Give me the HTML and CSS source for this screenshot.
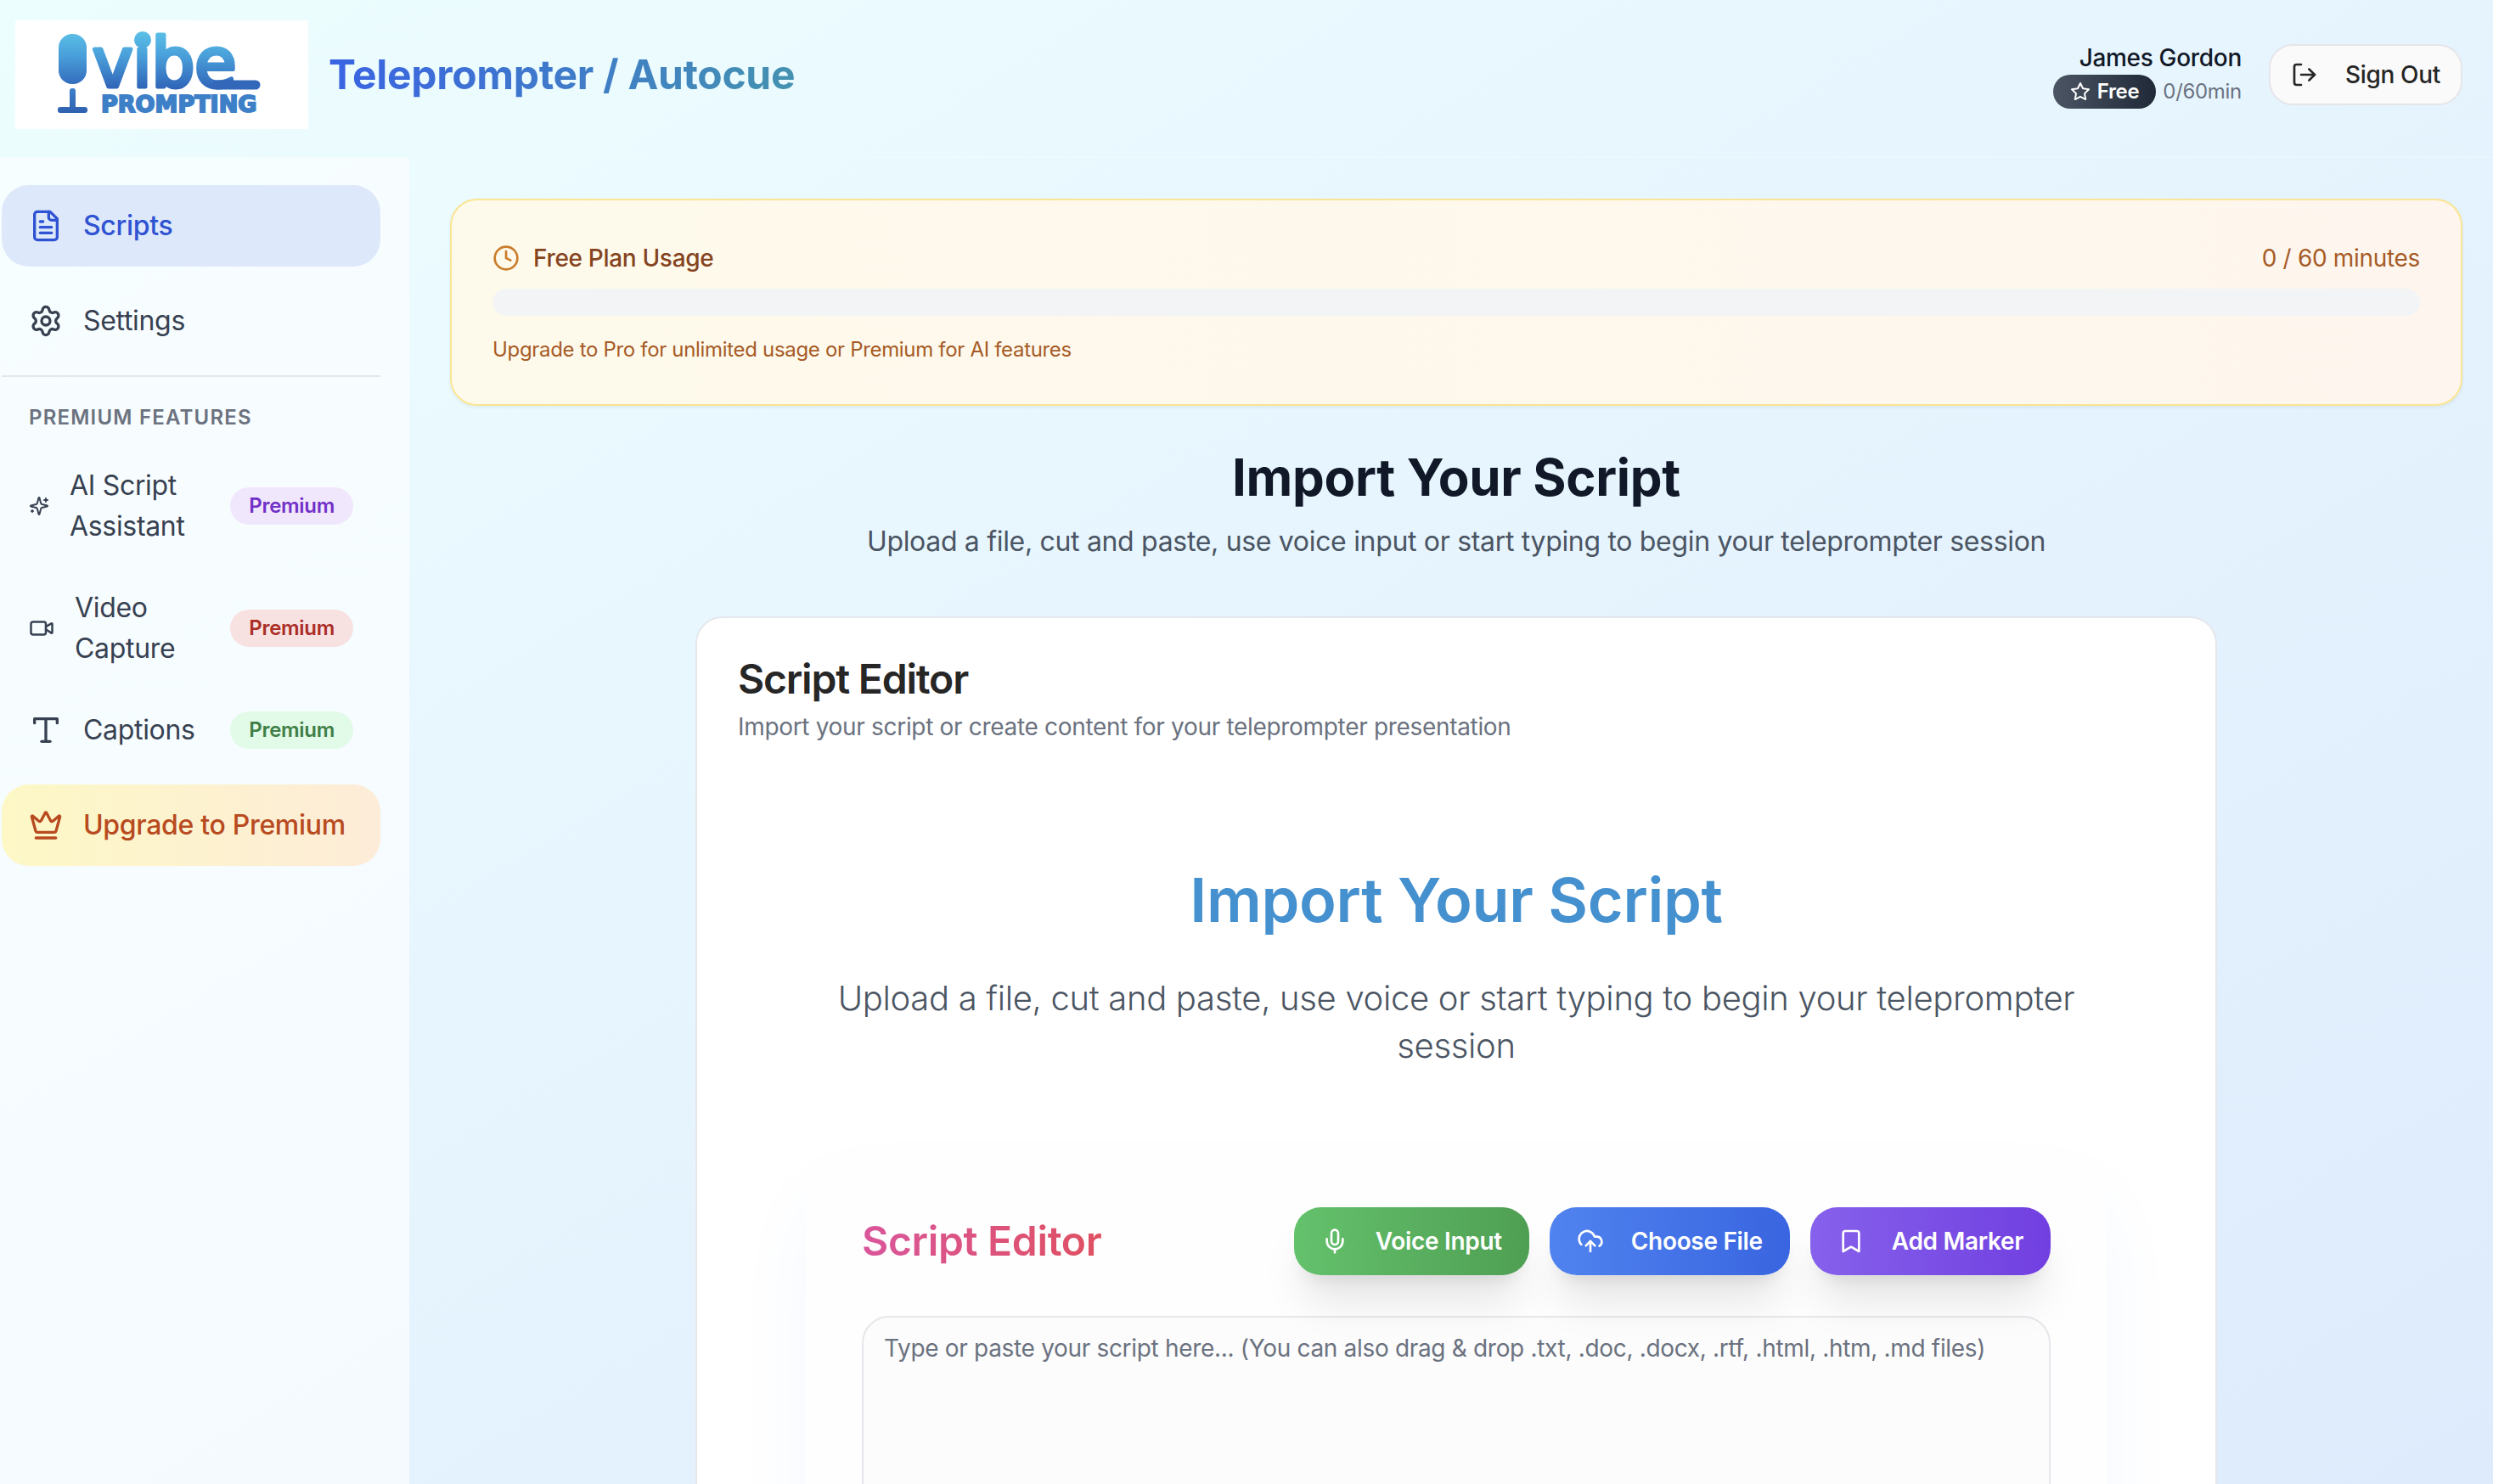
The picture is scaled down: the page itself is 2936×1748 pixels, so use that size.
FILE: index.html
```html
<!DOCTYPE html>
<html lang="en">
<head>
<meta charset="utf-8">
<meta name="viewport" content="width=device-width, initial-scale=1">
<title>Teleprompter / Autocue</title>
<link rel="stylesheet" href="styles.css">
</head>
<body>
<div class="app">
  <header class="header">
    <a class="logo" href="#" aria-label="Vibe Prompting">
      <svg class="logo-art" viewBox="0 0 345 128">
        <defs>
          <linearGradient id="mark" gradientUnits="userSpaceOnUse" x1="0" y1="14" x2="0" y2="82">
            <stop offset="0" stop-color="#5abfe6"/>
            <stop offset="0.4" stop-color="#4aa0da"/>
            <stop offset="1" stop-color="#2f62b7"/>
          </linearGradient>
          <linearGradient id="stand" gradientUnits="userSpaceOnUse" x1="0" y1="78" x2="0" y2="110">
            <stop offset="0" stop-color="#3f83cb"/>
            <stop offset="1" stop-color="#2d5fae"/>
          </linearGradient>
        </defs>
        <rect x="51" y="16" width="33" height="59" rx="16" fill="url(#mark)"/>
        <rect x="64" y="80" width="7" height="26" rx="3" fill="url(#stand)"/>
        <rect x="50" y="102" width="35" height="7" rx="3" fill="url(#stand)"/>
        <text class="logo-word" x="91" y="78">vibe</text>
        <circle cx="150" cy="23" r="10" fill="url(#mark)"/>
        <path d="M238 76H283" fill="none" stroke="#3267ba" stroke-width="11" stroke-linecap="round"/>
        <text class="logo-sub" x="101" y="108">PROMPTING</text>
      </svg>
    </a>
    <h1 class="brand-title">Teleprompter / Autocue</h1>
    <div class="account">
      <div class="user">
        <span class="user-name">James Gordon</span>
        <span class="user-plan">
          <span class="plan-badge">
            <svg class="icon icon-xs" viewBox="0 0 24 24"><polygon points="12 2 15.09 8.26 22 9.27 17 14.14 18.18 21.02 12 17.77 5.82 21.02 7 14.14 2 9.27 8.91 8.26 12 2"/></svg>
            Free
          </span>
          <span class="plan-minutes">0/60min</span>
        </span>
      </div>
      <button class="sign-out" type="button">
        <svg class="icon icon-sm" viewBox="0 0 24 24"><path d="M9 21H5a2 2 0 0 1-2-2V5a2 2 0 0 1 2-2h4"/><path d="M16 17l5-5-5-5"/><path d="M21 12H9"/></svg>
        Sign Out
      </button>
    </div>
  </header>

  <div class="body">
    <aside class="sidebar">
      <nav class="nav">
        <button class="nav-item nav-item-active" type="button">
          <svg class="icon icon-md" viewBox="0 0 24 24"><path d="M15 2H6a2 2 0 0 0-2 2v16a2 2 0 0 0 2 2h12a2 2 0 0 0 2-2V7Z"/><path d="M14 2v4a2 2 0 0 0 2 2h4"/><path d="M10 9H8"/><path d="M16 13H8"/><path d="M16 17H8"/></svg>
          Scripts
        </button>
        <button class="nav-item" type="button">
          <svg class="icon icon-md" viewBox="0 0 24 24"><path d="M9.671 4.136a2.34 2.34 0 0 1 4.659 0 2.34 2.34 0 0 0 3.319 1.915 2.34 2.34 0 0 1 2.33 4.033 2.34 2.34 0 0 0 0 3.831 2.34 2.34 0 0 1-2.33 4.033 2.34 2.34 0 0 0-3.319 1.915 2.34 2.34 0 0 1-4.659 0 2.34 2.34 0 0 0-3.32-1.915 2.34 2.34 0 0 1-2.33-4.033 2.34 2.34 0 0 0 0-3.831A2.34 2.34 0 0 1 6.35 6.051a2.34 2.34 0 0 0 3.319-1.915"/><circle cx="12" cy="12" r="3"/></svg>
          Settings
        </button>
        <section class="premium">
          <h2 class="premium-title">Premium Features</h2>
          <button class="nav-item" type="button">
            <svg class="icon icon-sparkles" viewBox="0 0 24 24"><path d="M9.937 15.5A2 2 0 0 0 8.5 14.063l-6.135-1.582a.5.5 0 0 1 0-.962L8.5 9.936A2 2 0 0 0 9.937 8.5l1.582-6.135a.5.5 0 0 1 .963 0L14.063 8.5A2 2 0 0 0 15.5 9.937l6.135 1.581a.5.5 0 0 1 0 .964L15.5 14.063a2 2 0 0 0-1.437 1.437l-1.582 6.135a.5.5 0 0 1-.963 0z"/><path d="M20 3v4"/><path d="M22 5h-4"/><path d="M4 17v2"/><path d="M5 18H3"/></svg>
            <span class="nav-label">AI Script Assistant</span>
            <span class="badge badge-purple">Premium</span>
          </button>
          <button class="nav-item" type="button">
            <svg class="icon icon-video" viewBox="0 0 24 24"><path d="m16 13 5.223 3.482a.5.5 0 0 0 .777-.416V7.87a.5.5 0 0 0-.752-.432L16 10.5"/><rect x="2" y="6" width="14" height="12" rx="2"/></svg>
            <span class="nav-label">Video Capture</span>
            <span class="badge badge-red">Premium</span>
          </button>
          <button class="nav-item" type="button">
            <svg class="icon icon-md" viewBox="0 0 24 24"><path d="M4 7V4h16v3"/><path d="M9 20h6"/><path d="M12 4v16"/></svg>
            <span class="nav-label">Captions</span>
            <span class="badge badge-green">Premium</span>
          </button>
        </section>
        <button class="nav-item nav-item-upgrade" type="button">
          <svg class="icon icon-md" viewBox="0 0 24 24"><path d="M11.562 3.266a.5.5 0 0 1 .876 0L15.39 8.87a1 1 0 0 0 1.516.294L21.183 5.5a.5.5 0 0 1 .798.519l-2.834 10.246a1 1 0 0 1-.956.734H5.81a1 1 0 0 1-.957-.734L2.02 6.02a.5.5 0 0 1 .798-.519l4.276 3.664a1 1 0 0 0 1.516-.294z"/><path d="M5 21h14"/></svg>
          Upgrade to Premium
        </button>
      </nav>
    </aside>

    <main class="main">
      <section class="usage">
        <div class="usage-head">
          <svg class="icon icon-sm usage-icon" viewBox="0 0 24 24"><circle cx="12" cy="12" r="10"/><path d="M12 6v6l4 2"/></svg>
          <span class="usage-title">Free Plan Usage</span>
          <span class="usage-count">0 / 60 minutes</span>
        </div>
        <div class="usage-bar" role="progressbar" aria-label="Free plan usage" aria-valuemin="0" aria-valuemax="60" aria-valuenow="0"></div>
        <p class="usage-hint">Upgrade to Pro for unlimited usage or Premium for AI features</p>
      </section>

      <section class="intro">
        <h2 class="intro-title">Import Your Script</h2>
        <p class="intro-text">Upload a file, cut and paste, use voice input or start typing to begin your teleprompter session</p>
      </section>

      <section class="card">
        <h3 class="card-title">Script Editor</h3>
        <p class="card-text">Import your script or create content for your teleprompter presentation</p>
        <div class="import">
          <h2 class="import-title">Import Your Script</h2>
          <p class="import-text">Upload a file, cut and paste, use voice or start typing to begin your teleprompter session</p>
          <div class="editor">
            <div class="editor-head">
              <h3 class="editor-title">Script Editor</h3>
              <div class="actions">
                <button class="action action-green" type="button">
                  <svg class="icon icon-sm" viewBox="0 0 24 24"><path d="M12 2a3 3 0 0 0-3 3v7a3 3 0 0 0 6 0V5a3 3 0 0 0-3-3Z"/><path d="M19 10v2a7 7 0 0 1-14 0v-2"/><path d="M12 19v3"/></svg>
                  Voice Input
                </button>
                <button class="action action-blue" type="button">
                  <svg class="icon icon-sm" viewBox="0 0 24 24"><path d="M4 14.899A7 7 0 1 1 15.71 8h1.79a4.5 4.5 0 0 1 2.5 8.242"/><path d="M12 12v9"/><path d="m16 16-4-4-4 4"/></svg>
                  Choose File
                </button>
                <button class="action action-purple" type="button">
                  <svg class="icon icon-sm" viewBox="0 0 24 24"><path d="m19 21-7-4-7 4V5a2 2 0 0 1 2-2h10a2 2 0 0 1 2 2v16z"/></svg>
                  Add Marker
                </button>
              </div>
            </div>
            <textarea class="editor-input" aria-label="Script" placeholder="Type or paste your script here... (You can also drag &amp; drop .txt, .doc, .docx, .rtf, .html, .htm, .md files)"></textarea>
          </div>
        </div>
      </section>
    </main>
  </div>
</div>
</body>
</html>
```
FILE: styles.css
```css
* {
  box-sizing: border-box;
  margin: 0;
}

body {
  font-family: Inter, "Liberation Sans", sans-serif;
  font-size: 32px;
  line-height: 48px;
  letter-spacing: -0.01em;
  color: #262626;
}

button,
textarea {
  font: inherit;
  letter-spacing: inherit;
  color: inherit;
}

button {
  border: 0;
  background: none;
  cursor: pointer;
}

.app {
  display: flex;
  flex-direction: column;
  height: 100vh;
  overflow: hidden;
  background: linear-gradient(to bottom right, #edfefe, #e6f4fe 50%, #deebfc);
}

/* Icons */

.icon {
  flex: none;
  fill: none;
  stroke: currentColor;
  stroke-width: 2;
  stroke-linecap: round;
  stroke-linejoin: round;
}

.icon-xs { width: 24px; height: 24px; }
.icon-sm { width: 32px; height: 32px; }
.icon-md { width: 40px; height: 40px; }
.icon-sparkles { width: 24px; height: 40px; }
.icon-video { width: 30px; height: 40px; }

/* Header */

.header {
  flex: none;
  display: flex;
  align-items: center;
  gap: 24px;
  padding: 24px 36px 32px 18px;
  border-bottom: 2px solid rgba(255, 255, 255, 0.2);
}

.logo {
  display: block;
  width: 345px;
  height: 128px;
  background: #fff;
}

.logo-art {
  display: block;
  width: 100%;
  height: 100%;
}

.logo-word,
.logo-sub {
  font-family: "DejaVu Sans", sans-serif;
  letter-spacing: normal;
}

.logo-word {
  font-size: 80px;
  fill: url(#mark);
  stroke: url(#mark);
  stroke-width: 5px;
  stroke-linejoin: round;
}

.logo-sub {
  font-size: 27px;
  font-weight: 700;
  fill: #3e80c8;
  stroke: #3e80c8;
  stroke-width: 2px;
}

.brand-title {
  font-size: 48px;
  line-height: 64px;
  font-weight: 700;
  color: transparent;
  background: linear-gradient(to right, #3a63e3, #4492b0);
  background-clip: text;
  -webkit-background-clip: text;
}

.account {
  display: flex;
  align-items: center;
  gap: 32px;
  margin-left: auto;
}

.user {
  display: flex;
  flex-direction: column;
  align-items: flex-end;
  font-size: 24px;
  line-height: 32px;
}

.user-name {
  font-size: 28px;
  line-height: 40px;
  font-weight: 500;
  color: #111827;
}

.user-plan {
  display: flex;
  align-items: center;
  gap: 8px;
  color: #6b7280;
}

.plan-badge {
  display: flex;
  align-items: center;
  gap: 8px;
  padding: 4px 20px;
  border-radius: 20px;
  font-weight: 600;
  color: #fff;
  background: linear-gradient(to right, #4b5563, #1f2937);
}

.sign-out {
  display: flex;
  align-items: center;
  gap: 32px;
  height: 72px;
  padding: 0 24px;
  border: 2px solid #e5e5ea;
  border-radius: 28px;
  font-size: 28px;
  line-height: 40px;
  font-weight: 500;
  background: #fafafa;
}

/* Sidebar */

.body {
  flex: 1;
  display: flex;
  min-height: 0;
}

.sidebar {
  flex: none;
  width: 482px;
  padding: 32px 34px 32px 2px;
  background: rgba(255, 255, 255, 0.6);
}

.nav {
  display: flex;
  flex-direction: column;
  gap: 16px;
}

.nav-item {
  display: flex;
  align-items: center;
  gap: 24px;
  width: 100%;
  padding: 24px 32px;
  border-radius: 32px;
  text-align: left;
  color: #374151;
}

.nav-item-active {
  font-weight: 500;
  color: #2f53d2;
  background: #dde8fb;
}

.nav-item-upgrade {
  font-weight: 500;
  color: #b84a20;
  background: linear-gradient(to right, #fdf8c6, #fdecd8);
}

.nav-label {
  flex: 1;
}

.premium {
  padding-top: 32px;
  border-top: 2px solid #e5e7eb;
}

.premium-title {
  margin-bottom: 16px;
  padding: 0 32px;
  font-size: 24px;
  line-height: 32px;
  font-weight: 600;
  letter-spacing: 0.05em;
  text-transform: uppercase;
  color: #6b7280;
}

.badge {
  flex: none;
  padding: 6px 22px;
  border-radius: 22px;
  font-size: 24px;
  line-height: 32px;
  font-weight: 600;
}

.badge-purple { color: #7230c8; background: #f1e7fc; }
.badge-red { color: #ab2e27; background: #f8e2e1; }
.badge-green { color: #3f7f45; background: #e2fae8; }

/* Main column */

.main {
  flex: 1;
  min-width: 0;
  padding: 48px 36px 48px 48px;
}

.usage {
  padding: 48px;
  border: 2px solid #fae592;
  border-radius: 32px;
  background: linear-gradient(to right, #fefaeb, #fef6ee);
  box-shadow: 0 2px 4px rgba(0, 0, 0, 0.06);
}

.usage-head {
  display: flex;
  align-items: center;
  gap: 16px;
  font-size: 28px;
  line-height: 40px;
}

.usage-icon {
  color: #ca7d2b;
}

.usage-title {
  font-weight: 500;
  color: #854420;
}

.usage-count {
  margin-left: auto;
  color: #a65b26;
}

.usage-bar {
  height: 32px;
  margin: 16px 0 24px;
  border-radius: 16px;
  background: #f3f4f6;
}

.usage-hint {
  font-size: 24px;
  line-height: 32px;
  color: #a65b26;
}

.intro {
  padding: 48px 0 64px;
  text-align: center;
}

.intro-title {
  margin-bottom: 16px;
  font-size: 60px;
  line-height: 72px;
  font-weight: 700;
  color: #111827;
}

.intro-text {
  color: #4b5563;
}

.card {
  max-width: 1792px;
  margin: 0 auto;
  padding: 48px;
  border: 2px solid #e5e7eb;
  border-radius: 32px;
  background: #fff;
}

.card-title {
  margin-bottom: 12px;
  font-size: 48px;
  line-height: 48px;
  font-weight: 600;
  letter-spacing: -0.025em;
}

.card-text {
  font-size: 28px;
  line-height: 40px;
  color: #6b7280;
}

.import {
  padding: 144px 80px 80px;
  text-align: center;
}

.import-title {
  margin-bottom: 48px;
  font-size: 72px;
  line-height: 80px;
  font-weight: 600;
  color: #4590cf;
}

.import-text {
  margin-bottom: 96px;
  font-size: 40px;
  line-height: 56px;
  font-weight: 300;
  color: #4b5563;
}

.editor {
  padding: 64px;
  border: 2px solid #fefefe;
  border-radius: 48px;
  text-align: left;
  background: #fefefe;
  box-shadow: 0 50px 100px -24px rgba(59, 130, 246, 0.1);
}

.editor-head {
  display: flex;
  align-items: center;
  justify-content: space-between;
  margin-bottom: 48px;
}

.editor-title {
  font-size: 48px;
  line-height: 64px;
  font-weight: 600;
  color: transparent;
  background: linear-gradient(to right, #d9569b, #df5061);
  background-clip: text;
  -webkit-background-clip: text;
}

.actions {
  display: flex;
  gap: 24px;
}

.action {
  display: flex;
  align-items: center;
  gap: 32px;
  height: 80px;
  padding: 0 32px;
  border-radius: 32px;
  font-size: 28px;
  line-height: 40px;
  font-weight: 600;
  color: #fff;
  box-shadow: 0 40px 50px -10px rgba(0, 0, 0, 0.1), 0 16px 20px -12px rgba(0, 0, 0, 0.1);
}

.action-green { background: linear-gradient(to right, #64c16c, #4f9f53); }
.action-blue { background: linear-gradient(to right, #5083ef, #3965e0); }
.action-purple { background: linear-gradient(to right, #8661ec, #713fe0); }

.editor-input {
  display: block;
  width: 100%;
  height: 640px;
  padding: 16px 24px;
  border: 2px solid #e5e7eb;
  border-radius: 32px;
  font-size: 28px;
  line-height: 40px;
  background: #fcfcfc;
  resize: none;
}

.editor-input::placeholder {
  color: #6b7280;
  opacity: 1;
}
```
